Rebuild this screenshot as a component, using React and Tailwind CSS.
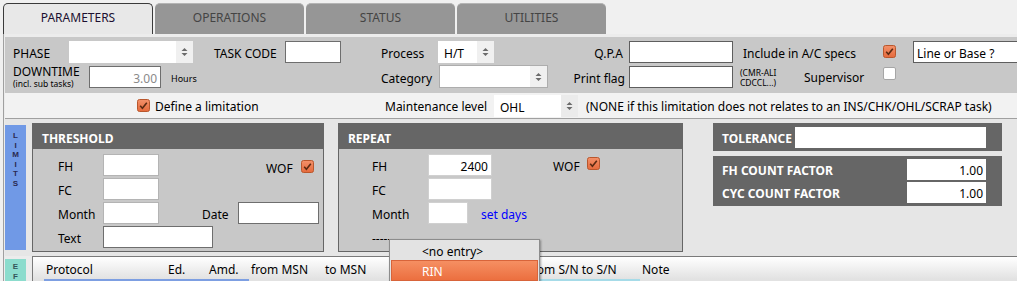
import React from "react";

const Spin = () => (
  <svg width="7" height="10" viewBox="0 0 7 10">
    <path d="M0.5 4 L3.5 1 L6.5 4 Z M0.5 6 L3.5 9 L6.5 6 Z" fill="#6b6b6b" />
  </svg>
);

function Select({ cls, value, spin = "bg-[#f0f0f0]" }) {
  return (
    <div className={"flex bg-white " + cls}>
      <div className="flex-1 flex items-center pl-[6px] pt-[4px] text-[12px] text-black">{value}</div>
      <div className={"w-[17px] flex items-center justify-center " + spin}>
        <Spin />
      </div>
    </div>
  );
}

function Input({ cls, children }) {
  return <div className={"bg-white flex items-center " + cls}>{children}</div>;
}

function Check({ on, cls = "" }) {
  if (!on)
    return <div className={"w-[13px] h-[13px] bg-white border border-[#a6a6a6] rounded-[2px] " + cls} />;
  return (
    <div className={"w-[13px] h-[13px] " + cls}>
      <svg width="13" height="13" viewBox="0 0 13 13">
        <defs>
          <linearGradient id="og" x1="0" y1="0" x2="0" y2="1">
            <stop offset="0" stopColor="#f3916a" />
            <stop offset="1" stopColor="#e56a3c" />
          </linearGradient>
        </defs>
        <rect x="0.5" y="0.5" width="12" height="12" rx="2" fill="url(#og)" stroke="#b9572d" />
        <path d="M3.2 6.8 L5.4 9.2 L9.8 3.8" fill="none" stroke="#5a2a12" strokeWidth="1.6" />
      </svg>
    </div>
  );
}

function Tab({ active, label }) {
  if (active)
    return (
      <div className="w-[150px] h-[31px] pb-[2px] bg-[#e8e8e8] border border-b-0 border-[#3a3a3a] rounded-t-[5px] flex items-center justify-center text-[12px] text-[#1c1030]">
        {label}
      </div>
    );
  return (
    <div className="w-[149px] h-[31px] pb-[2px] ml-[2px] bg-[#969696] border-t border-[#b4b4b4] rounded-t-[5px] flex items-center justify-center text-[12px] text-[#444444]">
      {label}
    </div>
  );
}

export default function App() {
  return (
    <div className="relative w-[1017px] h-[281px] overflow-hidden bg-[#f0f0f0] font-['Noto_Sans',sans-serif] text-[12px] text-black leading-none">
      {/* tabs */}
      <div className="h-[34px] flex items-end pl-[3px]">
        <Tab active label="PARAMETERS" />
        <Tab label="OPERATIONS" />
        <Tab label="STATUS" />
        <Tab label="UTILITIES" />
      </div>

      {/* body */}
      <div className="ml-[3px] border-l border-[#a0a0a0] pl-[1px] pt-[3px] bg-[#ececec]">
        {/* params */}
        <div className="h-[56px] bg-[#c8c8c8] pt-[4px]">
          <div className="flex items-center h-[22px]">
            <div className="w-[64px] pl-[8px] pt-[4px]">PHASE</div>
            <Select cls="w-[124px] h-[22px]" value="" />
            <div className="ml-[21px] w-[71px] pt-[4px]">TASK CODE</div>
            <Input cls="w-[56px] h-[22px] border border-[#6e6e6e]" />
            <div className="ml-[40px] w-[57px] pt-[4px]">Process</div>
            <Select cls="w-[56px] h-[22px]" value="H/T" />
            <div className="w-[135px] text-right pr-[6px] pt-[4px]">Q.P.A</div>
            <Input cls="w-[104px] h-[22px] border border-[#5e5e5e]" />
            <div className="ml-[10px] w-[140px] pt-[4px]">Include in A/C specs</div>
            <Check on cls="self-start mt-[4px]" />
            <Input cls="ml-[17px] flex-1 h-[22px] border border-[#5e5e5e] border-r-0 pl-[3px] pt-[3px]">Line or Base ?</Input>
          </div>
          <div className="flex items-center h-[23px] mt-[2px]">
            <div className="w-[84px] pl-[8px] flex flex-col">
              <div className="leading-[14px]">DOWNTIME</div>
              <div className="text-[8.5px] leading-[10px]">(incl. sub tasks)</div>
            </div>
            <Input cls="w-[72px] h-[22px] border border-[#6e6e6e] justify-end pr-[3px] pt-[4px] text-[#8a8a8a]">3.00</Input>
            <div className="w-[220px] pl-[10px] pt-[3px] text-[9px]">Hours</div>
            <div className="w-[58px] pt-[4px]">Category</div>
            <Select cls="w-[109px] h-[23px] border border-[#adadad]" value="" />
            <div className="w-[81px] text-right pr-[4px] pt-[4px]">Print flag</div>
            <Input cls="w-[104px] h-[22px] border border-[#5e5e5e]" />
            <div className="ml-[7px] w-[64px] text-[8.5px] leading-[10px] pt-[2px]">
              (CMR-ALI
              <br />
              CDCCL...)
            </div>
            <div className="w-[79px] pt-[3px]">Supervisor</div>
            <Check cls="self-start mt-[2px]" />
          </div>
        </div>

        {/* define limitation row */}
        <div className="h-[26px] bg-[#f2f2f2] border-b border-[#a0a0a0] flex items-center">
          <Check on cls="ml-[132px]" />
          <div className="ml-[5px] w-[230px] pt-[3px]">Define a limitation</div>
          <div className="w-[109px] pt-[3px]">Maintenance level</div>
          <Select cls="w-[84px] h-[22px]" value="OHL" spin="bg-[#ebebeb]" />
          <div className="ml-[8px] pt-[3px]">(NONE if this limitation does not relates to an INS/CHK/OHL/SCRAP task)</div>
        </div>

        {/* limits area */}
        <div className="h-[137px] bg-[#e6e6e6] pt-[4px] flex items-start">
          <div className="w-[21px] h-[125px] mt-[2px] bg-[#7099e6] flex flex-col items-center pt-[6px] font-['Liberation_Sans',sans-serif] text-[8px] leading-[9.5px] font-bold text-[#2a2a50]">
            <span>L</span>
            <span>I</span>
            <span>M</span>
            <span>I</span>
            <span>T</span>
            <span>S</span>
          </div>

          {/* threshold */}
          <div className="ml-[6px] w-[292px] h-[129px] border border-[#666666] bg-[#c8c8c8]">
            <div className="h-[25px] bg-[#666666] flex items-center pl-[9px] pt-[4px] text-white font-bold">THRESHOLD</div>
            <div className="pt-[5px] flex flex-col gap-[2px] pl-[25px]">
              <div className="flex items-center h-[22px]">
                <div className="w-[45px] pt-[4px]">FH</div>
                <Input cls="w-[56px] h-[22px] border border-[#b4b4b4]" />
                <div className="ml-[107px] w-[35px] pt-[8px]">WOF</div>
                <Check on cls="mt-[3px]" />
              </div>
              <div className="flex items-center h-[22px]">
                <div className="w-[45px] pt-[4px]">FC</div>
                <Input cls="w-[56px] h-[22px] border border-[#b4b4b4]" />
              </div>
              <div className="flex items-center h-[22px]">
                <div className="w-[45px] pt-[4px]">Month</div>
                <Input cls="w-[56px] h-[22px] border border-[#b4b4b4]" />
                <div className="ml-[43px] w-[36px] pt-[4px]">Date</div>
                <Input cls="w-[81px] h-[22px] border border-[#6e6e6e]" />
              </div>
              <div className="flex items-center h-[22px]">
                <div className="w-[45px] pt-[4px]">Text</div>
                <Input cls="w-[110px] h-[22px] border border-[#6e6e6e]" />
              </div>
            </div>
          </div>

          {/* repeat */}
          <div className="ml-[14px] w-[345px] h-[129px] border border-[#666666] bg-[#c8c8c8]">
            <div className="h-[25px] bg-[#666666] flex items-center pl-[9px] pt-[4px] text-white font-bold">REPEAT</div>
            <div className="pt-[5px] flex flex-col gap-[2px] pl-[33px]">
              <div className="flex items-center h-[22px]">
                <div className="w-[56px] pt-[4px]">FH</div>
                <Input cls="w-[64px] h-[22px] border border-[#d0d0d0] justify-end pr-[3px] pt-[4px]">2400</Input>
                <div className="ml-[61px] w-[34px] pt-[4px]">WOF</div>
                <Check on cls="self-start mt-[3px]" />
              </div>
              <div className="flex items-center h-[22px]">
                <div className="w-[56px] pt-[4px]">FC</div>
                <Input cls="w-[64px] h-[22px] border border-[#d0d0d0]" />
              </div>
              <div className="flex items-center h-[22px]">
                <div className="w-[56px] pt-[4px]">Month</div>
                <Input cls="w-[40px] h-[22px] border border-[#d0d0d0]" />
                <div className="ml-[13px] pt-[4px] text-[#0000ff]">set days</div>
              </div>
              <div className="flex items-center h-[22px]">
                <div className="w-[56px] pt-[4px]">-----</div>
              </div>
            </div>
          </div>

          {/* tolerance */}
          <div className="ml-[30px] w-[289px] flex flex-col">
            <div className="h-[28px] bg-[#666666] flex items-center pl-[9px]">
              <div className="w-[73px] pt-[4px] text-white font-bold">TOLERANCE</div>
              <Input cls="w-[191px] h-[21px]" />
            </div>
            <div className="mt-[5px] h-[50px] bg-[#666666] pt-[3px] pl-[9px] flex flex-col gap-[2px]">
              <div className="flex items-center h-[21px]">
                <div className="w-[185px] pt-[2px] text-white font-bold">FH COUNT FACTOR</div>
                <Input cls="w-[79px] h-[21px] justify-end pr-[3px] pt-[3px]">1.00</Input>
              </div>
              <div className="flex items-center h-[21px]">
                <div className="w-[185px] pt-[2px] text-white font-bold">CYC COUNT FACTOR</div>
                <Input cls="w-[79px] h-[21px] justify-end pr-[3px] pt-[3px]">1.00</Input>
              </div>
            </div>
          </div>
        </div>

        {/* bottom EF row */}
        <div className="flex items-start">
          <div className="w-[21px] h-[30px] mt-[3px] bg-[#8cdccd] flex flex-col items-center pt-[3px] font-['Liberation_Sans',sans-serif] text-[8px] leading-[9.5px] font-bold text-[#33555a]">
            <span>E</span>
            <span>F</span>
          </div>
          <div className="ml-[6px] flex-1 border-t border-l border-[#7a7a7a]">
            <div className="h-[22px] flex items-center pl-[13px] pt-[3px] bg-gradient-to-b from-[#ffffff] to-[#e2e2e2]">
              <div className="w-[122px]">Protocol</div>
              <div className="w-[41px]">Ed.</div>
              <div className="w-[42px]">Amd.</div>
              <div className="w-[74px]">from MSN</div>
              <div className="w-[203px]">to MSN</div>
              <div className="w-[114px]">from S/N to S/N</div>
              <div>Note</div>
            </div>
            <div className="flex h-[4px] bg-[#e2e2e2]">
              <div className="w-[11px]" />
              <div className="w-[205px] bg-[#7d9fe2]" />
              <div className="w-[291px]" />
              <div className="w-[100px] bg-[#a6dbe8]" />
            </div>
          </div>
        </div>
      </div>

      {/* dropdown popup */}
      <div className="absolute left-[389px] top-[239px] w-[151px] h-[46px] bg-[#e3e3e3] border border-[#8c8c8c] shadow-[1px_1px_2px_rgba(0,0,0,0.35)]">
        <div className="h-[20px] flex items-center pl-[32px] pt-[4px]">&lt;no entry&gt;</div>
        <div className="mx-[1px] h-[21px] bg-gradient-to-b from-[#f58f62] to-[#ec6f3f] border border-[#d8643a] flex items-center pl-[30px] pt-[3px] text-white">
          RIN
        </div>
      </div>
    </div>
  );
}
